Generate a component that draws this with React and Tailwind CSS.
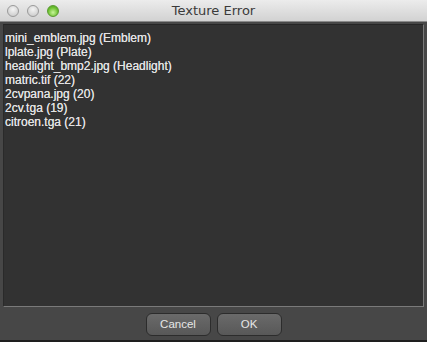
import React from 'react';

const files = [
    'mini_emblem.jpg (Emblem)',
    'lplate.jpg (Plate)',
    'headlight_bmp2.jpg (Headlight)',
    'matric.tif (22)',
    '2cvpana.jpg (20)',
    '2cv.tga (19)',
    'citroen.tga (21)',
];

const Light = ({ color }) => (
    <span
        className="w-[12px] h-[12px] rounded-full border border-[#9a9a9a]"
        style={{ background: color }}
    />
);

export default function App() {
    return (
        <div className="w-[427px] h-[342px] flex flex-col bg-[#474747] font-['DejaVu_Sans',sans-serif]">
            {/* title bar */}
            <div className="relative h-[22px] flex items-center bg-gradient-to-b from-[#ececec] to-[#d2d2d2] border-b border-[#8a8a8a]">
                <div className="flex gap-[8px] pl-[7px] items-center">
                    <Light color="radial-gradient(circle at 50% 35%, #f4f4f4, #c4c4c4)" />
                    <Light color="radial-gradient(circle at 50% 35%, #f4f4f4, #c4c4c4)" />
                    <span className="w-[12px] h-[12px] rounded-full border border-[#5a9a30] bg-[radial-gradient(circle_at_50%_65%,#c8f59a,#6cc030_60%,#4a9a20)]" />
                </div>
                <div className="absolute inset-0 flex items-center justify-center text-[13px] text-[#3a3a3a]">
                    Texture Error
                </div>
            </div>

            {/* message list */}
            <div className="mx-[3px] mt-[2px] h-[283px] bg-[#323232] border-r border-b border-[#7a7a7a] border-t border-l border-t-[#262626] border-l-[#2a2a2a] pt-[6px] pl-[1px] font-['Liberation_Sans',sans-serif]">
                {files.map((f) => (
                    <div key={f} className="text-[12px] leading-[14px] text-[#e2e2e2] [text-shadow:0_0_0.3px_#e2e2e2]">
                        {f}
                    </div>
                ))}
            </div>

            {/* buttons */}
            <div className="flex-1 flex justify-center gap-[6px] pt-[6px] border-b-2 border-[#1e1e1e] font-['Liberation_Sans',sans-serif]">
                <button className="w-[65px] h-[23px] rounded-[6px] bg-gradient-to-b from-[#6a6a6a] to-[#585858] border border-[#2c2c2c] text-[11.5px] text-[#e6e6e6]">
                    Cancel
                </button>
                <button className="w-[65px] h-[23px] rounded-[6px] bg-gradient-to-b from-[#6a6a6a] to-[#585858] border border-[#2c2c2c] text-[11.5px] text-[#e6e6e6]">
                    OK
                </button>
            </div>
        </div>
    );
}
